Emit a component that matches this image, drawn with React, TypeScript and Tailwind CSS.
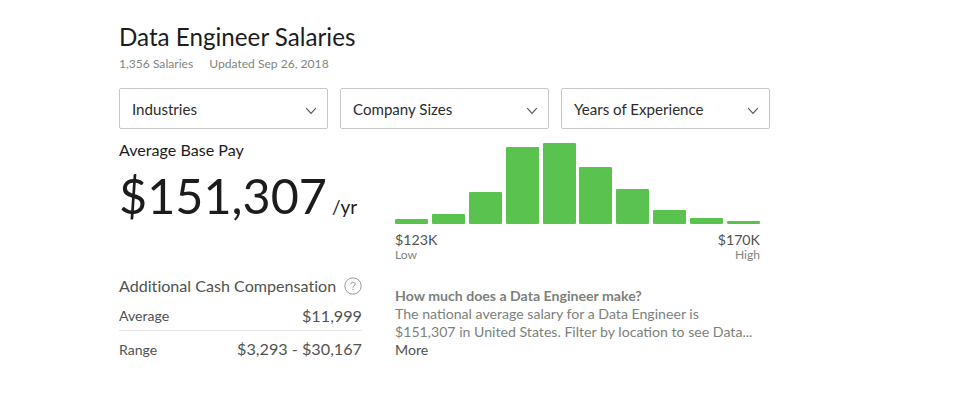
const bars = [5, 10, 32, 77, 81, 57, 35, 14, 6, 3];
const selects = ["Industries", "Company Sizes", "Years of Experience"];

function Select({ label }: { label: string }) {
  return (
    <button className="flex h-[41px] w-[209px] items-center justify-between rounded-[2px] border border-[#c4c9c5] pl-3 pr-[10px] text-[15.1px] text-[#2c2c2c]">
      <span className="pt-[2px]">{label}</span>
      <svg className="mt-[4px]" width="12" height="8" viewBox="0 0 12 8" fill="none" stroke="#555" strokeWidth="1.1">
        <path d="M1.2 1.2 6 6.4l4.8-5.2" />
      </svg>
    </button>
  );
}

export default function App() {
  return (
    <main className="h-[400px] w-[975px] overflow-hidden bg-white pl-[119px] pt-[21px] font-['Lato',sans-serif] text-[#1c1c1c]">
      <h1 className="h-[32px] whitespace-nowrap text-[24.2px] leading-[32px]">Data Engineer Salaries</h1>
      <div className="mt-[3px] flex h-[16px] gap-4 text-[12.1px] leading-[16px] text-[#808580]">
        <span>1,356 Salaries</span>
        <span>Updated Sep 26, 2018</span>
      </div>
      <div className="mt-[16px] flex gap-3">
        {selects.map((s) => <Select key={s} label={s} />)}
      </div>
      <div className="flex">
        <section className="w-[276px]">
          <h2 className="mt-[11px] h-[20px] text-[16.1px] leading-[20px]">Average Base Pay</h2>
          <div className="flex h-[117px] items-baseline whitespace-nowrap pt-[5px]">
            <span className="text-[48.5px] leading-[60px]">$151,307</span>
            <span className="ml-[5px] text-[19px]">/yr</span>
          </div>
          <div className="flex h-[18px] w-[243px] items-center justify-between text-[16.1px] text-[#505350]">
            <span className="[font-variant-ligatures:none]">Additional Cash Compensation</span>
            <svg width="18" height="18" viewBox="0 0 18 18" fill="none" stroke="#8c918c">
              <circle cx="9" cy="9" r="8.2" strokeWidth="0.9" />
              <path d="M6.9 7.2c0-2.8 4.3-2.5 4.3 0 0 1.5-2.2 1.5-2.2 3.4M9 12v1.3" />
            </svg>
          </div>
          <div className="flex h-[36px] w-[243px] items-center justify-between border-b border-[#e5e5e5] pt-[7px] text-[#505350]">
            <span className="text-[14.1px]">Average</span><span className="text-[16.2px]">$11,999</span>
          </div>
          <div className="flex h-[37px] w-[243px] items-center justify-between text-[#505350]">
            <span className="text-[14.1px]">Range</span><span className="text-[16.2px]">$3,293 - $30,167</span>
          </div>
        </section>
        <section className="w-[365px]">
          <div className="mt-[14px] flex h-[81px] items-end justify-between">
            {bars.map((height, i) => (
              <div key={i} className="w-[33px] rounded-[1px] bg-[#5ac350]" style={{ height }} />
            ))}
          </div>
          <div className="mt-[7px] flex justify-between text-[14.2px] leading-[18px] text-[#505350]"><span>$123K</span><span>$170K</span></div>
          <div className="mt-[-1px] flex justify-between text-[12.1px] leading-[14px] text-[#808580]"><span>Low</span><span>High</span></div>
          <div className="mt-[25px] whitespace-nowrap text-[14.13px] leading-[18px] text-[#7c817c]">
            <h3 className="font-bold">How much does a Data Engineer make?</h3>
            <p>The national average salary for a Data Engineer is<br />$151,307 in United States. Filter by location to see Data...</p>
            <a className="text-[#505350]">More</a>
          </div>
        </section>
      </div>
    </main>
  );
}
